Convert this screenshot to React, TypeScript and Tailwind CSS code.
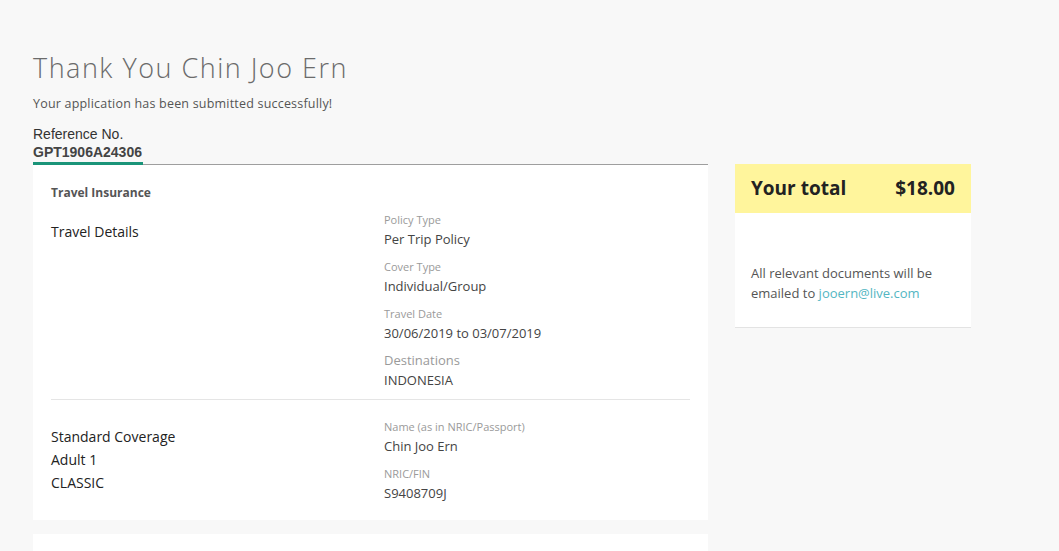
import React from "react";

interface Field {
  label: string;
  value: string;
  big?: boolean;
}

const travelFields: Field[] = [
  { label: "Policy Type", value: "Per Trip Policy" },
  { label: "Cover Type", value: "Individual/Group" },
  { label: "Travel Date", value: "30/06/2019 to 03/07/2019" },
  { label: "Destinations", value: "INDONESIA", big: true },
];

const insuredFields: Field[] = [
  { label: "Name (as in NRIC/Passport)", value: "Chin Joo Ern" },
  { label: "NRIC/FIN", value: "S9408709J" },
];

const FieldList: React.FC<{ fields: Field[] }> = ({ fields }) => (
  <div className="flex flex-col gap-[8px]">
    {fields.map((f) => (
      <div key={f.label} className="flex flex-col">
        <span className={`${f.big ? "text-[13px]" : "text-[11px]"} leading-[19px] pb-[1px] text-[#9a9a9a]`}>
          {f.label}
        </span>
        <span className="text-[13px] leading-[19px] text-[#444]">{f.value}</span>
      </div>
    ))}
  </div>
);

const App: React.FC = () => {
  return (
    <div className="h-[551px] w-[1059px] overflow-hidden bg-[#f8f8f8] font-['Open_Sans',sans-serif]">
      <div className="pl-[33px] pt-[50px]">
        <h1 className="text-[27px] leading-[36px] font-light text-[#6b6b6b] tracking-[1.5px]">
          Thank You Chin Joo Ern
        </h1>
        <p className="mt-[9px] text-[12.5px] leading-[18px] text-[#555] tracking-[0.2px]">
          Your application has been submitted successfully!
        </p>
        <div className="mt-[12px] font-['Liberation_Sans',Arial,sans-serif]">
          <div className="text-[14px] leading-[19px] text-[#333]">Reference No.</div>
          <div className="text-[14px] leading-[17px] font-bold text-[#444]">GPT1906A24306</div>
        </div>

        <div className="mt-[3px] flex gap-[27px] items-start">
          <div className="w-[675px] flex flex-col gap-[14px]">
            <div className="relative border-t border-[#9e9e9e]">
              <div className="absolute -top-[3px] left-0 h-[3px] w-[110px] bg-[#1a9479]" />
              <div className="bg-white px-[18px] pt-[19px] pb-[17px]">
                <div className="text-[12px] leading-[18px] font-bold text-[#555]">Travel Insurance</div>
                <div className="mt-[8px] flex pb-[9px] border-b border-[#e5e5e5]">
                  <div className="w-[333px] pt-[11px] text-[14px] leading-[22px] text-[#222]">Travel Details</div>
                  <FieldList fields={travelFields} />
                </div>
                <div className="mt-[17px] flex">
                  <div className="w-[333px] pt-[8px] flex flex-col text-[14px] leading-[23px] text-[#222]">
                    <span>Standard Coverage</span>
                    <span>Adult 1</span>
                    <span>CLASSIC</span>
                  </div>
                  <FieldList fields={insuredFields} />
                </div>
              </div>
            </div>
            <div className="bg-white h-[40px]" />
          </div>

          <div className="w-[236px] bg-white border-b border-[#e3e3e3]">
            <div className="h-[49px] bg-[#fff59c] px-[16px] flex items-center justify-between text-[19px] font-bold text-[#222]">
              <span>Your total</span>
              <span>$18.00</span>
            </div>
            <div className="px-[16px] pt-[50px] pb-[24px] text-[13px] leading-[20px] text-[#555]">
              <p>All relevant documents will be</p>
              <p>
                emailed to <span className="text-[#53b6c2]">jooern@live.com</span>
              </p>
            </div>
          </div>
        </div>
      </div>
    </div>
  );
};

export default App;
